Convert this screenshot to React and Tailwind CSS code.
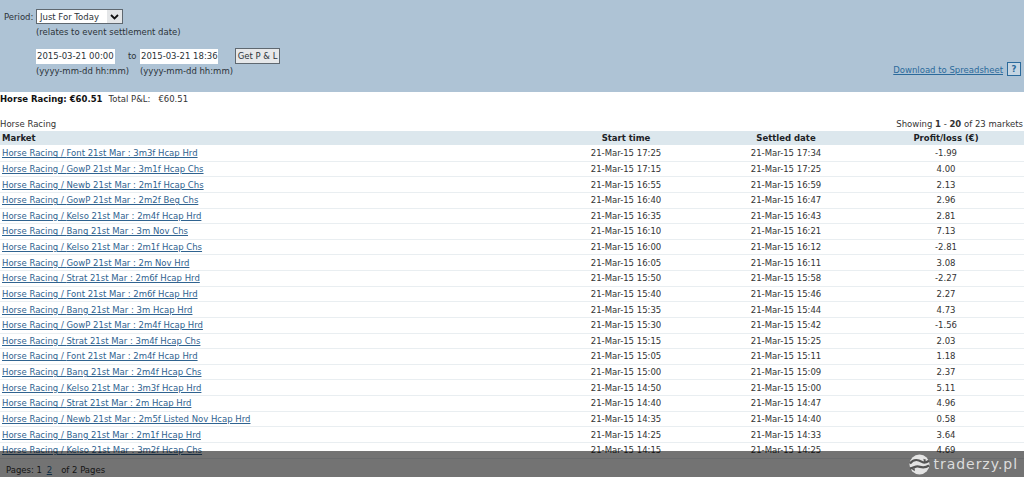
import React from "react";

const rows = [
  ["Font 21st Mar : 3m3f Hcap Hrd", "17:25", "17:34", "-1.99"],
  ["GowP 21st Mar : 3m1f Hcap Chs", "17:15", "17:25", "4.00"],
  ["Newb 21st Mar : 2m1f Hcap Chs", "16:55", "16:59", "2.13"],
  ["GowP 21st Mar : 2m2f Beg Chs", "16:40", "16:47", "2.96"],
  ["Kelso 21st Mar : 2m4f Hcap Hrd", "16:35", "16:43", "2.81"],
  ["Bang 21st Mar : 3m Nov Chs", "16:10", "16:21", "7.13"],
  ["Kelso 21st Mar : 2m1f Hcap Chs", "16:00", "16:12", "-2.81"],
  ["GowP 21st Mar : 2m Nov Hrd", "16:05", "16:11", "3.08"],
  ["Strat 21st Mar : 2m6f Hcap Hrd", "15:50", "15:58", "-2.27"],
  ["Font 21st Mar : 2m6f Hcap Hrd", "15:40", "15:46", "2.27"],
  ["Bang 21st Mar : 3m Hcap Hrd", "15:35", "15:44", "4.73"],
  ["GowP 21st Mar : 2m4f Hcap Hrd", "15:30", "15:42", "-1.56"],
  ["Strat 21st Mar : 3m4f Hcap Chs", "15:15", "15:25", "2.03"],
  ["Font 21st Mar : 2m4f Hcap Hrd", "15:05", "15:11", "1.18"],
  ["Bang 21st Mar : 2m4f Hcap Chs", "15:00", "15:09", "2.37"],
  ["Kelso 21st Mar : 3m3f Hcap Hrd", "14:50", "15:00", "5.11"],
  ["Strat 21st Mar : 2m Hcap Hrd", "14:40", "14:47", "4.96"],
  ["Newb 21st Mar : 2m5f Listed Nov Hcap Hrd", "14:35", "14:40", "0.58"],
  ["Bang 21st Mar : 2m1f Hcap Hrd", "14:25", "14:33", "3.64"],
  ["Kelso 21st Mar : 3m2f Hcap Chs", "14:15", "14:25", "4.69"],
];

const gridCols = "grid grid-cols-[548px_156px_164px_156px] items-center";

const Logo = () => (
  <svg width="21" height="21" viewBox="0 0 22 22" className="shrink-0">
    <circle cx="11" cy="11" r="10.5" fill="#e4e4e4" />
    <path d="M1 10c4-5 9-4 12-2s5 1 8-1" fill="none" stroke="#555" strokeWidth="2.4" />
    <path d="M1 15c3 0 5-2 8-2s6 3 12-1" fill="none" stroke="#555" strokeWidth="2.4" />
    <path d="M15 5l3 1-2 3z" fill="#555" />
    <path d="M6 18l-3-2 3-1z" fill="#555" />
  </svg>
);

const App = () => {
  return (
    <div className="relative h-[477px] w-[1024px] overflow-hidden whitespace-nowrap bg-white font-['DejaVu_Sans',sans-serif] text-[8.5px] leading-[12px] text-[#333]">
      <div className="flex h-[92px] bg-[#aec3d5] text-[#2c3339]">
        <div className="w-[890px] pl-[4px] pt-[9px]">
          <div className="flex items-center">
            <span className="w-[32px]">Period:</span>
            <div className="flex h-[15px] w-[87px] items-center justify-between border border-[#5f6870] bg-white pl-[3px]">
              <span>Just For Today</span>
              <span className="flex h-[13px] w-[15px] items-center justify-center bg-[#e4e6e8] text-[#111]">
                <svg width="9" height="6" viewBox="0 0 9 6">
                  <path d="M1 1l3.500 3.500L8 1" fill="none" stroke="#111" strokeWidth="1.800" />
                </svg>
              </span>
            </div>
          </div>
          <div className="mt-[2px] pl-[32px]">(relates to event settlement date)</div>
          <div className="mt-[10px] flex items-center pl-[32px]">
            <div className="flex h-[15px] w-[79px] items-center bg-white pl-[1px]">2015-03-21 00:00</div>
            <span className="ml-[13px] w-[12px]">to</span>
            <div className="flex h-[15px] w-[78px] items-center bg-white pl-[1px]">2015-03-21 18:36</div>
            <div className="ml-[17px] flex h-[16px] w-[45px] items-center justify-center border border-[#5f6870] bg-[#e6e8ea]">Get P &amp; L</div>
          </div>
          <div className="mt-[1px] flex pl-[32px]">
            <span className="w-[104px]">(yyyy-mm-dd hh:mm)</span>
            <span>(yyyy-mm-dd hh:mm)</span>
          </div>
        </div>
        <div className="flex flex-1 items-end justify-end pb-[16px] pr-[3px]">
          <a className="mr-[4px] text-[#2b6a9b] underline">Download to Spreadsheet</a>
          <span className="flex h-[14px] w-[14px] items-center justify-center border border-[#2b6a9b] bg-[#c5d5e2] font-bold text-[#2b6a9b]">?</span>
        </div>
      </div>

      <div className="mt-[1px] flex h-[12px] items-center">
        <b className="text-[#111]">Horse Racing: €60.51</b>
        <span className="ml-[6px]">Total P&amp;L:</span>
        <span className="ml-[8px]">€60.51</span>
      </div>

      <div className="mt-[13px] flex h-[12px] items-center justify-between pr-[1px]">
        <span>Horse Racing</span>
        <span>
          Showing <b>1</b> - <b>20</b> of 23 markets
        </span>
      </div>

      <div className={`${gridCols} mt-[1px] mb-[1px] h-[14px] bg-[#dce7ed] font-bold text-[#1c2226]`}>
        <span className="pl-[2px]">Market</span>
        <span className="text-center">Start time</span>
        <span className="text-center">Settled date</span>
        <span className="text-center">Profit/loss (€)</span>
      </div>

      {rows.map((row) => (
        <div key={row[0]} className={`${gridCols} h-[15.630px] border-b border-[#e9eef1]`}>
          <a className="pl-[2px] text-[#2f6390] underline">Horse Racing / {row[0]}</a>
          <span className="text-center">21-Mar-15 {row[1]}</span>
          <span className="text-center">21-Mar-15 {row[2]}</span>
          <span className="text-center">{row[3]}</span>
        </div>
      ))}

      <div className="mt-[5px] pl-[6px]">
        Pages: <span>1</span> <a className="ml-[2px] text-[#2b6a9b] underline">2</a>
        <span className="ml-[9px]">of 2 Pages</span>
      </div>

      {/* watermark bar over the page */}
      <div className="absolute inset-x-0 bottom-0 flex h-[26px] items-center justify-end bg-black/55 pr-[6px]">
        <Logo />
        <span className="ml-[4px] text-[14px] tracking-[0.95px] text-[#dcdcdc]">traderzy.pl</span>
      </div>
    </div>
  );
};

export default App;
